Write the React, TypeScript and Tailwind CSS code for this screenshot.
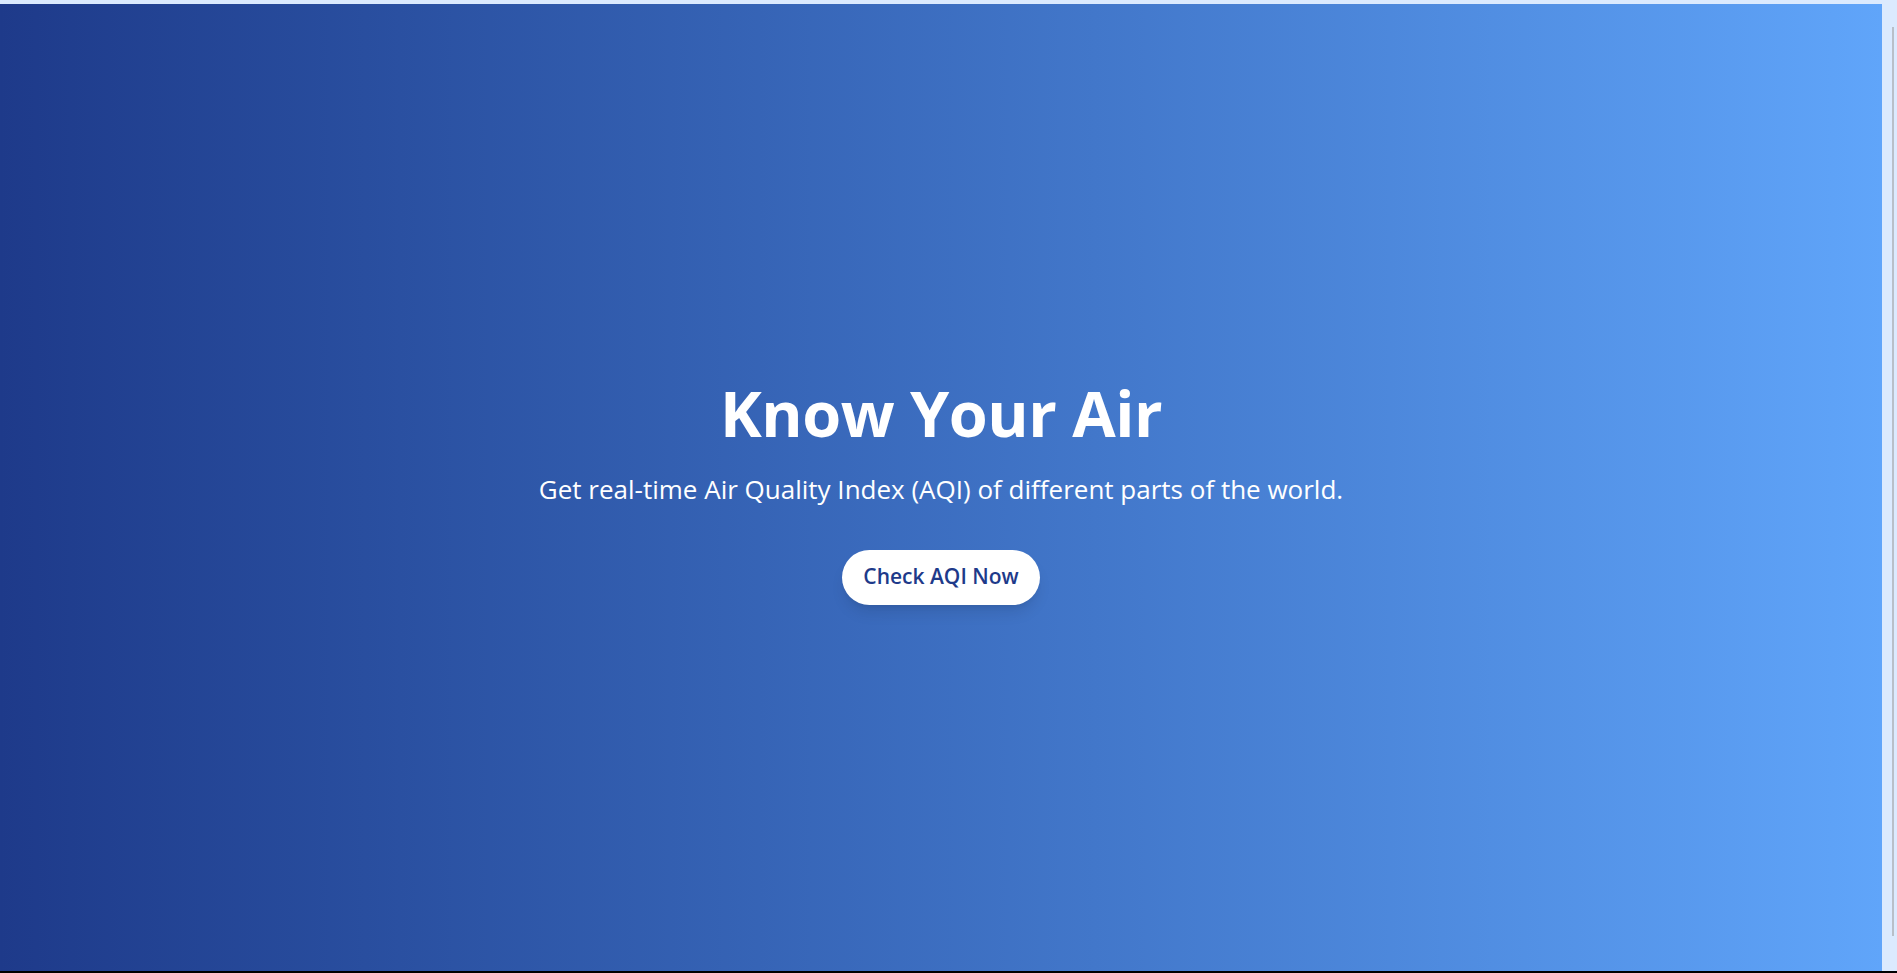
export default function App() {
  return (
    <div
      className="flex h-[973px] w-full border-b-2 border-black bg-[#dbeafe] pt-1"
      style={{ fontFamily: '"Open Sans", "Noto Sans", sans-serif' }}
    >
      <section className="flex flex-1 flex-col items-center justify-center bg-gradient-to-r from-[#1e3a8a] to-[#60a5fa] pt-[10px] text-center text-white">
        <h1 className="text-[63px] leading-none font-bold tracking-[-0.5px]">Know Your Air</h1>
        <p className="mt-[27px] text-[26px] leading-9">
          Get real-time Air Quality Index (AQI) of different parts of the world.
        </p>
        <button className="mt-[43px] flex h-[55px] items-center rounded-full bg-white px-[21px] text-[21px] font-semibold text-[#1e3a8a] shadow-lg">
          Check AQI Now
        </button>
      </section>
      <aside className="flex w-[15px] shrink-0 justify-end pt-[23px] pr-[3px] pb-[35px]">
        <div className="w-[2px] bg-[#b8bfc8]" />
      </aside>
    </div>
  );
}
